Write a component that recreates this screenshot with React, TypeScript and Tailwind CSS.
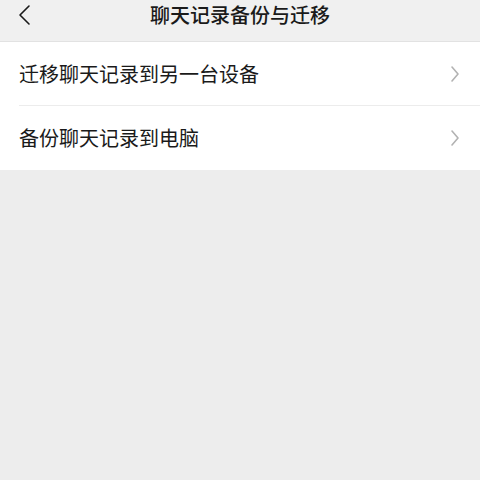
export default function App() {
  const items = ["迁移聊天记录到另一台设备", "备份聊天记录到电脑"];
  return (
    <div
      className="w-[480px] h-[480px] bg-[#ededed] text-[#1a1a1a]"
      style={{ fontFamily: '"Noto Sans CJK SC", "Noto Sans", sans-serif' }}
    >
      <header className="relative h-[42px] flex items-center justify-center bg-[#f0f0f0] border-b border-[#e2e2e2]">
        <svg
          className="absolute left-[17px] top-[4px]"
          width="16"
          height="22"
          viewBox="0 0 16 22"
          fill="none"
          stroke="#1a1a1a"
          strokeWidth="1.6"
          strokeLinecap="round"
          strokeLinejoin="round"
        >
          <path d="M12 2 L3 11 L12 20" />
        </svg>
        <h1 className="text-[20px] font-medium leading-none -mt-[12px]">聊天记录备份与迁移</h1>
      </header>
      <ul className="bg-white">
        {items.map((t, i) => (
          <li key={t} className="pl-[19px]">
            <div
              className={
                "h-[64px] flex items-center justify-between pr-[20px] " +
                (i < items.length - 1 ? "border-b border-[#ececec]" : "")
              }
            >
              <span className="text-[20px] leading-none">{t}</span>
              <svg
                width="10"
                height="18"
                viewBox="0 0 10 18"
                fill="none"
                stroke="#b2b2b2"
                strokeWidth="1.6"
                strokeLinecap="round"
                strokeLinejoin="round"
              >
                <path d="M2 2 L8 9 L2 16" />
              </svg>
            </div>
          </li>
        ))}
      </ul>
    </div>
  );
}
